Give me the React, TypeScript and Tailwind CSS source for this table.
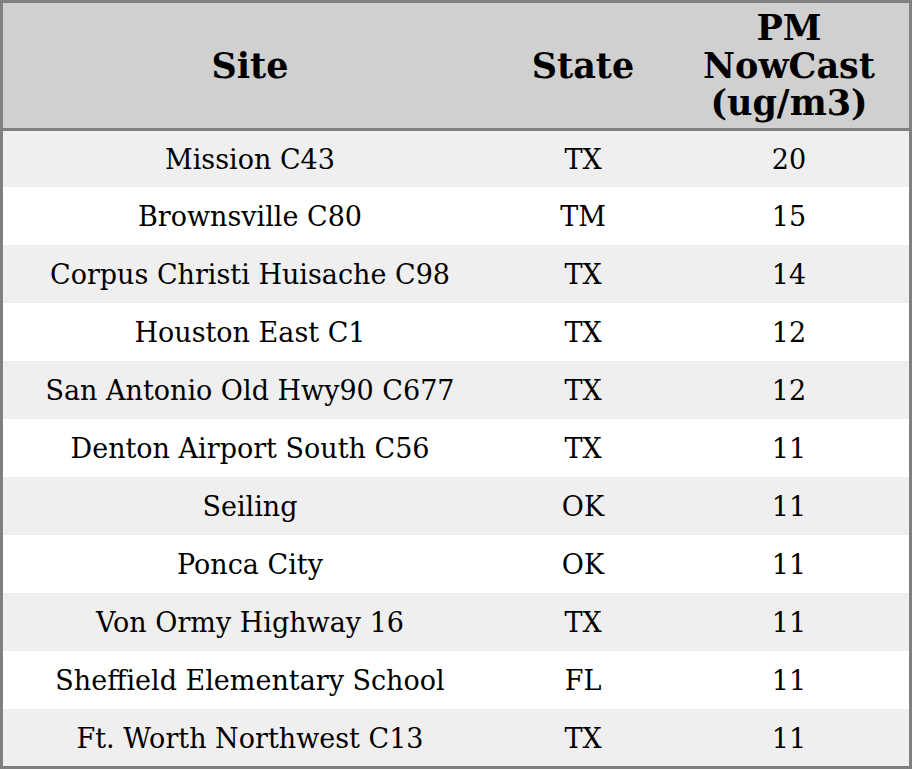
import React from 'react';

type Row = { site: string; state: string; pm: number };

const rows: Row[] = [
  { site: 'Mission C43', state: 'TX', pm: 20 },
  { site: 'Brownsville C80', state: 'TM', pm: 15 },
  { site: 'Corpus Christi Huisache C98', state: 'TX', pm: 14 },
  { site: 'Houston East C1', state: 'TX', pm: 12 },
  { site: 'San Antonio Old Hwy90 C677', state: 'TX', pm: 12 },
  { site: 'Denton Airport South C56', state: 'TX', pm: 11 },
  { site: 'Seiling', state: 'OK', pm: 11 },
  { site: 'Ponca City', state: 'OK', pm: 11 },
  { site: 'Von Ormy Highway 16', state: 'TX', pm: 11 },
  { site: 'Sheffield Elementary School', state: 'FL', pm: 11 },
  { site: 'Ft. Worth Northwest C13', state: 'TX', pm: 11 },
];

const rowHeight = (i: number) => {
  if (i === 0) return 'h-[56px]';
  if (i === rows.length - 1) return 'h-[57px]';
  return 'h-[58px]';
};

const App: React.FC = () => {
  return (
    <div className="w-[912px] h-[769px] border-[3px] border-[#808080] bg-white text-black font-['DejaVu_Serif',serif] flex flex-col">
      <div className="h-[128px] shrink-0 bg-[#d0d0d0] border-b-[3px] border-[#808080] grid grid-cols-[494px_172px_240px] items-center text-center text-[35px] font-bold leading-[37.5px]">
        <div>Site</div>
        <div>State</div>
        <div>PM<br />NowCast<br />(ug/m3)</div>
      </div>
      {rows.map((r, i) => (
        <div
          key={i}
          className={`${rowHeight(i)} shrink-0 grid grid-cols-[494px_172px_240px] items-center text-center text-[27px] pt-[3px] ${i % 2 === 0 ? 'bg-[#efefef]' : 'bg-white'}`}
        >
          <div>{r.site}</div>
          <div>{r.state}</div>
          <div>{r.pm}</div>
        </div>
      ))}
    </div>
  );
};

export default App;
